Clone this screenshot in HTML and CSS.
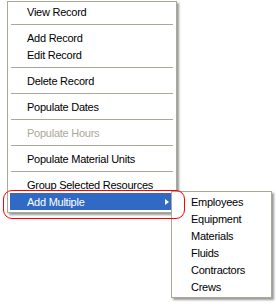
FILE: index.html
```html
<!DOCTYPE html>
<html lang="en">
  <head>
    <title>Context Menu</title>
    <meta charset="utf-8">
    <link rel="stylesheet" href="styles.css">
  </head>
  <body>

  <div class="stage">
    <div class="menu main">
      <div class="item">View Record</div>
      <div class="sep"></div>
      <div class="item">Add Record</div>
      <div class="item">Edit Record</div>
      <div class="sep"></div>
      <div class="item">Delete Record</div>
      <div class="sep"></div>
      <div class="item">Populate Dates</div>
      <div class="sep"></div>
      <div class="item disabled">Populate Hours</div>
      <div class="sep"></div>
      <div class="item">Populate Material Units</div>
      <div class="sep"></div>
      <div class="item">Group Selected Resources</div>
      <div class="item active">Add Multiple<span class="arrow"></span></div>
    </div>

    <div class="menu sub">
      <div class="item">Employees</div>
      <div class="item">Equipment</div>
      <div class="item">Materials</div>
      <div class="item">Fluids</div>
      <div class="item">Contractors</div>
      <div class="item">Crews</div>
    </div>

    <div class="callout"></div>
  </div>

  </body>
</html>
```

FILE: styles.css
```css
html, body {
  margin: 0;
  padding: 0;
  background: #ffffff;
  color: #000000;
  font-family: "Liberation Sans", Arial, sans-serif;
  font-size: 11px;
}

.stage {
  position: relative;
  width: 276px;
  height: 304px;
  padding: 1px 0 0 7px;
  box-sizing: border-box;
}

.menu {
  background: #ffffff;
  border: 1px solid #aca899;
  box-shadow: 2px 2px 2px rgba(0,0,0,0.4);
  box-sizing: border-box;
}

.main {
  width: 170px;
  padding: 1px 3px 2px 2px;
}

.item {
  position: relative;
  height: 17px;
  line-height: 18px;
  padding-left: 17px;
  letter-spacing: -0.25px;
  white-space: nowrap;
}

.item.disabled {
  color: #aca899;
}

.item.active {
  background: #316ac5;
  color: #ffffff;
}

.arrow {
  position: absolute;
  right: 4px;
  top: 6px;
  width: 0;
  height: 0;
  border-top: 3.5px solid transparent;
  border-bottom: 3.5px solid transparent;
  border-left: 4px solid #ffffff;
}

.sep {
  height: 9px;
  margin-left: 1px;
  background: linear-gradient(#aca899, #aca899) 0 4px / 100% 1px no-repeat;
}

.sub {
  position: absolute;
  left: 171px;
  top: 191px;
  width: 101px;
  padding: 1px 2px 2px 2px;
}

.callout {
  position: absolute;
  left: 3px;
  top: 190px;
  width: 182px;
  height: 29px;
  border: 1px solid #ff0000;
  border-radius: 9px;
  box-sizing: border-box;
}
```
